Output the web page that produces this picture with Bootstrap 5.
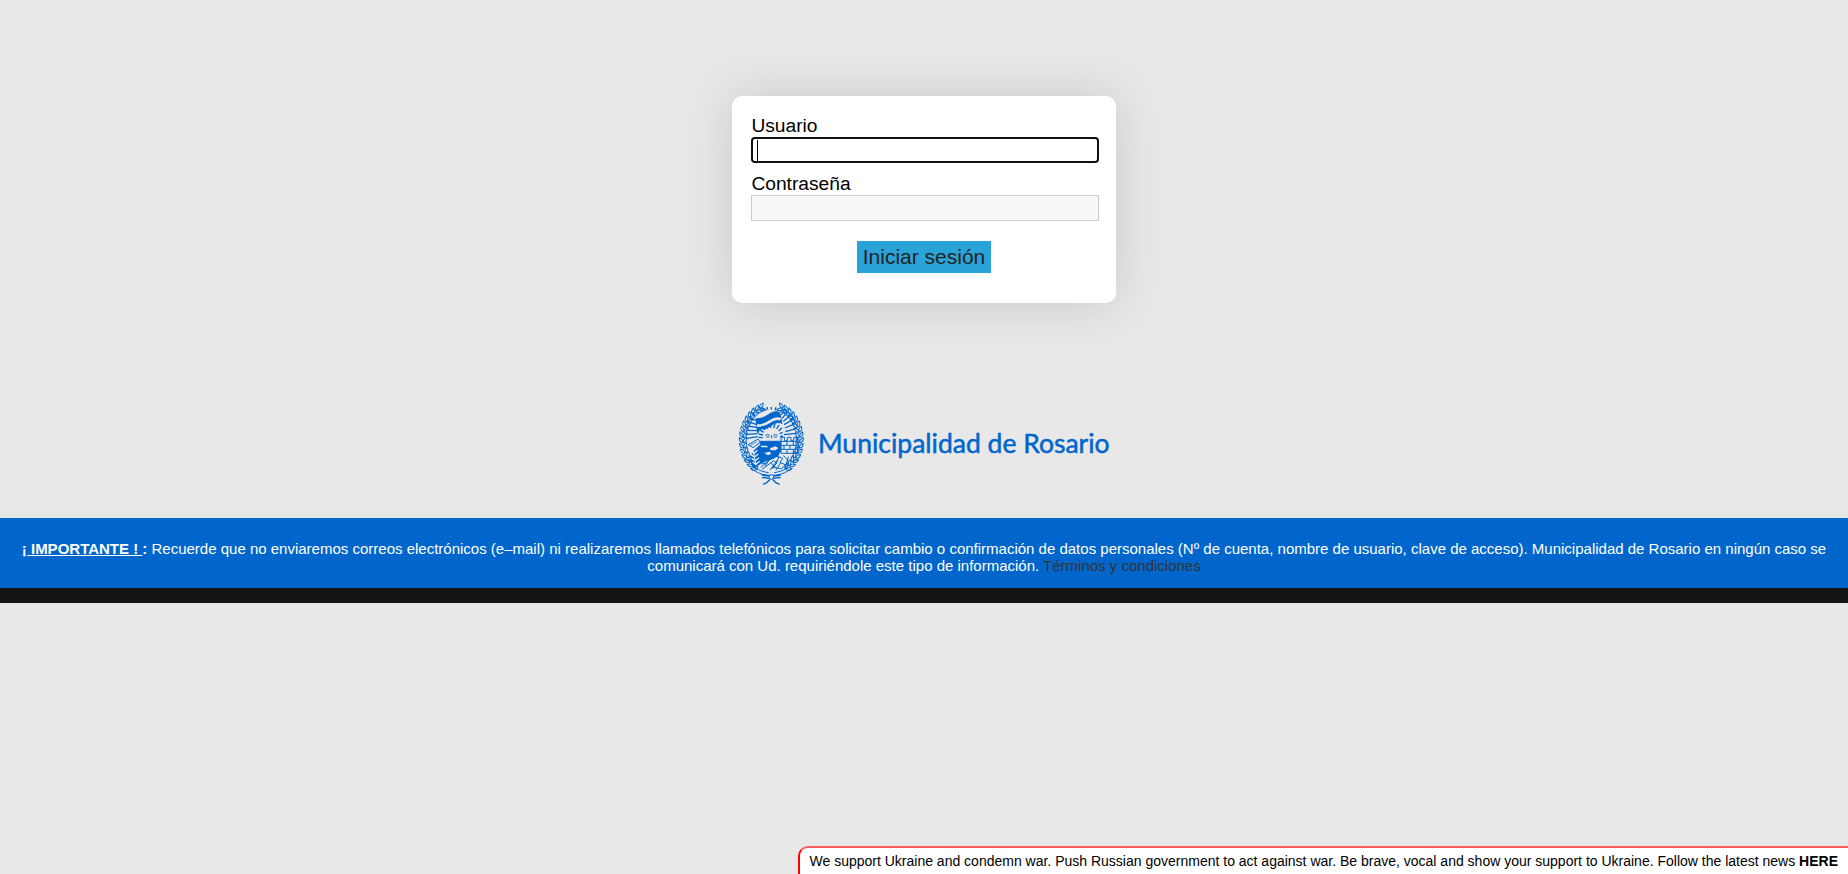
<!DOCTYPE html>
<html lang="es">
<head>
<meta charset="utf-8">
<meta name="viewport" content="width=device-width, initial-scale=1">
<title>Municipalidad de Rosario</title>
<link href="https://cdn.jsdelivr.net/npm/bootstrap@5.3.0/dist/css/bootstrap.min.css" rel="stylesheet">
<style>
body{background:#e8e8e8;font-family:"Liberation Sans",Arial,sans-serif;color:#000;line-height:normal;overflow:hidden}
.login-box{width:384px;height:207px;margin-top:96px;padding:19px 17px 0 19px;background:#fff;border-radius:10px;box-shadow:0 0 50px rgba(0,0,0,.14)}
.login-box label{font-size:19.2px;line-height:22px;display:block;padding-left:.4px}
.label-next{margin-top:10px}
.field{width:348px;height:26px;border:1px solid #ccc;border-radius:0;background:#f8f8f8}
.field-active{border:2px solid #101010;border-radius:4px;background:#fff;padding:1px 0 0 4px}
.caret{width:1px;height:21px;background:#000}
.actions{margin:20px 2px 0 0}
.btn-login{width:134px;height:32px;padding:0;border:0;border-radius:0;background:#2aa4d8;color:#222;font-size:21px;line-height:32px}
.brand{margin-top:92px;height:123px}
.notice{height:70px;padding:22px 20px 0;background:#06c;color:#fff;font-size:15px;line-height:17px}
.notice a{color:#333}
.strip{height:15px;background:#141414;font-size:8px;line-height:16px}
.support{right:0;bottom:0;height:28px;border:2px solid #f00;border-top-color:#ff5c5c;border-right:0;border-bottom:0;border-top-left-radius:10px;background:#fff;padding:5px 10px 0;font-size:14px;line-height:17px}
</style>
</head>
<body>
<main class="d-flex flex-column align-items-center">
  <form class="login-box">
    <label>Usuario</label>
    <div class="field field-active"><div class="caret"></div></div>
    <label class="label-next">Contraseña</label>
    <div class="field"></div>
    <div class="actions text-center"><button type="button" class="btn btn-login">Iniciar sesión</button></div>
  </form>
  <div class="brand">
    <svg width="388" height="95" viewBox="0 0 388 95" fill="none">
      <g transform="scale(.33333)" stroke="#06c" stroke-width="3">
        <g id="wreath"></g>
        <path d="M101 46l-5-8M113 44l-2-8M124 44v-8M135 46l3-9M156 70l18-20M160 79l26-21M162 89l31-18M165 99l32-14M166 110l34-10M154 60l11-19M74 62L64 52M74 76L57 65M78 88L54 80M84 97l-34-4M84 107l-36-1M83 116l-36 2M83 125l-32 5M162 119l36-4" stroke-width="4"/>
        <path d="M77 72c18-2 24-3 38-13 12-8 24-12 34-6l7 32c-12-5-21-1-33 7-12 8-22 11-34 10l-5 12c-4-12-3-26-7-42z" fill="#06c"/>
        <path d="M81 92c18 0 25-3 38-12 12-8 22-12 33-7" stroke="#e8e8e8" stroke-width="8"/>
        <path d="M103 134c-2-20 8-32 22-32s24 12 22 32z" fill="#e8e8e8" stroke="none"/>
        <path d="M101 112l-12-8M105 105l-9-12M113 101l-5-11M122 99l-1-12M131 99l4-12M140 102l7-12M146 108l10-10M99 120l-13-3M98 128l-13-1M149 116l9-4M150 125l9-2" stroke-width="4"/>
        <path d="M106 121q7-5 13 0M130 121q7-5 13 0M109 126h9M132 126h9M125 121v9"/>
        <path d="M88 139h64v26c-4 13-10 18-21 25-21 7-35 10-58 29l-12-22 7-26 24-22z" fill="#06c"/>
        <path d="M55 149l29-17 7 10-22 16z" fill="#e8e8e8"/>
        <path d="M60 152l22-12" stroke-width="2"/>
        <path d="M92 152h18l5 5H94zM120 160l16-6 9 5-8 7h-15zM103 174l16-4 5 6-10 5z" fill="#e8e8e8" stroke="none"/>
        <path d="M153 127h11v10h8v-10h11v10h8v-10h11v10h2v38H153zM153 139h50M153 151h50M153 163h50M171 139v12M190 139v12M162 151v12M180 151v12M171 163v12M190 163v12"/>
        <path d="M70 168l8 42" stroke="#e8e8e8" stroke-width="3"/>
        <path d="M62 168l10 7 10-9M63 179l10 7 12-9M65 190l10 7 12-9M68 201l9 7 12-9" stroke="#e8e8e8" stroke-width="4"/>
        <path d="M92 217l43-35 12 6-25 35M96 223l35-26 9 8-20 20M132 181c8-14 18-8 11 3l15 6-8 12 17 8-13 11-22-4M144 195l-15 26M152 203l-14 22M160 182c17 13 19 25 8 35M107 204l-12 3M116 197l-11 17M123 204l12 13M175 185l-10 37"/>
        <path d="M62 219c20 17 42 22 62 22s42-5 62-22M76 219c12 8 26 12 40 14M172 219c-12 8-26 12-40 14"/>
        <circle cx="124" cy="246" r="7" fill="#e8e8e8"/>
        <path d="M118 250c-8 1-13-6-22-1M130 250c8 1 13-6 22-1M120 253c-6 8-11 13-21 15M128 253c6 8 11 13 21 15M117 243l-22-3M131 243l22-3" stroke-width="4"/>
      </g>
      <text x="88" y="57.5" font-family="Lato,sans-serif" font-size="26.5" fill="#06c" stroke="#06c" stroke-width=".5">Municipalidad de Rosario</text>
    </svg>
  </div>
</main>
<footer>
  <div class="notice text-center"><b><u>¡ IMPORTANTE ! </u>:</b> Recuerde que no enviaremos correos electrónicos (e–mail) ni realizaremos llamados telefónicos para solicitar cambio o confirmación de datos personales (Nº de cuenta, nombre de usuario, clave de acceso). Municipalidad de Rosario en ningún caso se comunicará con Ud. requiriéndole este tipo de información. <a class="text-decoration-none" href="#">Términos y condiciones</a></div>
  <div class="strip">.</div>
</footer>
<div class="support position-fixed text-nowrap">We support Ukraine and condemn war. Push Russian government to act against war. Be brave, vocal and show your support to Ukraine. Follow the latest news <b>HERE</b></div>
<script src="https://cdn.jsdelivr.net/npm/bootstrap@5.3.0/dist/js/bootstrap.bundle.min.js"></script>
<script>
// Laurel wreath: pairs of leaves along both halves of an ellipse, open at the top
const wreath = document.getElementById('wreath');
let leaves = '';
for (const side of [-1, 1]) {
  for (let i = 0; i < 15; i++) {
    const t = (20 + i * 9) * Math.PI / 180;
    const x = 124 + side * 85 * Math.sin(t), y = 134 - 102 * Math.cos(t);
    const heading = Math.atan2(-102 * Math.sin(t), -side * 85 * Math.cos(t)) * 180 / Math.PI;
    for (const lean of [-32, 32]) {
      leaves += `<path d="M-5 0Q4-8 14 0Q4 8-5 0" stroke-width="3" transform="translate(${x.toFixed(1)} ${y.toFixed(1)}) rotate(${(heading + lean).toFixed(1)}) translate(0 ${lean > 0 ? 4 : -4})"/>`;
    }
  }
}
wreath.innerHTML = leaves;
</script>
</body>
</html>
